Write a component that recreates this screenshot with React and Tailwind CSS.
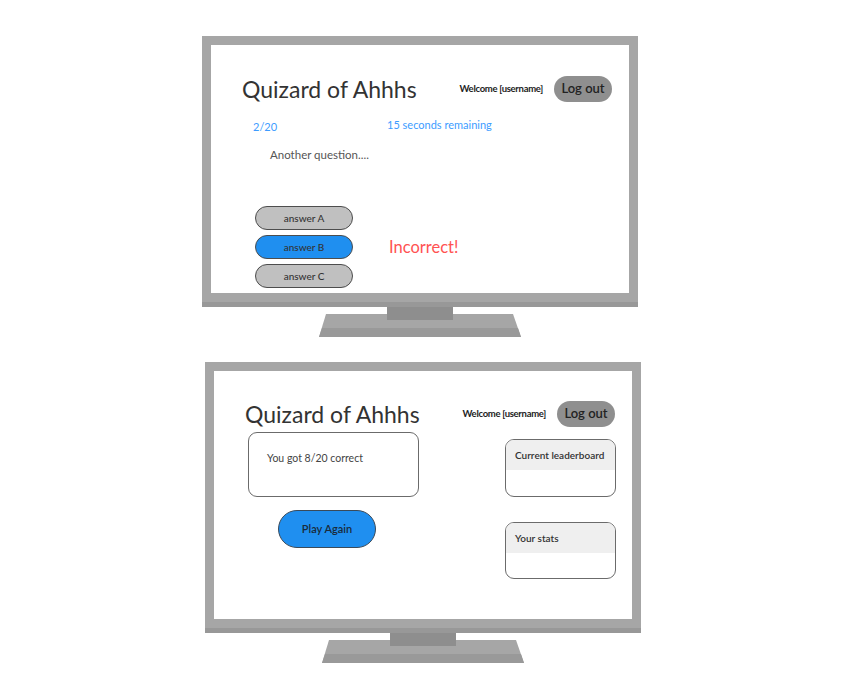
import React from "react"

const font = { fontFamily: "Lato, 'Open Sans', sans-serif" }

const Monitor = ({ className, children }) => {
  return (
    <div className={`flex flex-col items-center w-[436px] ${className}`}>
      <div className="w-[436px] border-[9px] border-b-0 border-[#a6a6a6] bg-white">
        <div className="h-[248px] relative overflow-hidden">{children}</div>
      </div>
      <div className="w-[436px] h-[14px] bg-[#a6a6a6] border-b-[5px] border-[#989898]" />
      {/* stand */}
      <svg width="202" height="30" viewBox="0 0 202 30">
        <polygon points="7,7 194,7 202,30 0,30" fill="#a6a6a6" />
        <polygon points="3,21 199,21 202,30 0,30" fill="#999999" />
        <rect x="68" y="0" width="66" height="13" fill="#8e8e8e" />
      </svg>
    </div>
  )
}

const Header = ({ top }) => (
  <div className={`flex items-center pl-[31px] pr-[17px] ${top}`}>
    <h1 className="text-[23px] leading-none text-[#333]">Quizard of Ahhhs</h1>
    <span className="ml-auto text-[9.5px] font-bold text-[#222] tracking-[-0.3px]">Welcome [username]</span>
    <button className="ml-[11px] w-[58px] h-[26px] rounded-full bg-[#8f8f8f] text-[13px] font-semibold text-[#222]">
      Log out
    </button>
  </div>
)

const AnswerButton = ({ label, active }) => (
  <button
    className={`w-[98px] h-[24px] rounded-full border-[1.5px] border-[#4d4d4d] text-[10px] font-medium text-[#333] ${
      active ? "bg-[#1f8ff0]" : "bg-[#c0c0c0]"
    }`}
  >
    {label}
  </button>
)

const Card = ({ title, className }) => (
  <div className={`w-[111px] rounded-[9px] border-[1.5px] border-[#6b6b6b] overflow-hidden bg-white ${className}`}>
    <div className="h-[30px] bg-[#efefef] pl-[9px] pt-[9px] text-[10px] leading-[12px] font-semibold text-[#333]">
      {title}
    </div>
  </div>
)

const App = () => {
  return (
    <div className="w-[868px] h-[689px] bg-white pt-[36px]" style={font}>
      {/* Quiz screen */}
      <Monitor className="ml-[202px]">
        <Header top="pt-[31px]" />
        <div className="flex pl-[42px] mt-[19px] text-[11px] leading-[12px] text-[#3d9cff]">
          <span className="w-[134px]">2/20</span>
          <span className="-mt-[2px]">15 seconds remaining</span>
        </div>
        <p className="pl-[59px] mt-[16px] text-[11.5px] leading-[12px] text-[#555]">Another question....</p>
        <div className="flex items-center pl-[44px] mt-[45px]">
          <div className="flex flex-col gap-[5px]">
            <AnswerButton label="answer A" />
            <AnswerButton label="answer B" active />
            <AnswerButton label="answer C" />
          </div>
          <span className="ml-[36px] text-[16.5px] text-[#ff5252]">Incorrect!</span>
        </div>
      </Monitor>

      {/* Results screen */}
      <Monitor className="ml-[205px] mt-[25px]">
        <Header top="pt-[30px]" />
        <div className="flex items-start">
          <div className="ml-[34px] mt-[5px]">
            <div className="w-[171px] h-[65px] rounded-[9px] border-[1.5px] border-[#6b6b6b] pl-[18px] pt-[19px] text-[10.5px] leading-[12px] text-[#444]">
              You got 8/20 correct
            </div>
            <button className="ml-[30px] mt-[13px] w-[98px] h-[38px] rounded-full bg-[#1f8ff0] border-[1.5px] border-[#3a4a5a] text-[11px] font-semibold text-[#1a2a3a]">
              Play Again
            </button>
          </div>
          <div className="ml-auto mr-[16px] mt-[12px]">
            <Card title="Current leaderboard" className="h-[58px]" />
            <Card title="Your stats" className="h-[57px] mt-[25px]" />
          </div>
        </div>
      </Monitor>
    </div>
  )
}

export default App
